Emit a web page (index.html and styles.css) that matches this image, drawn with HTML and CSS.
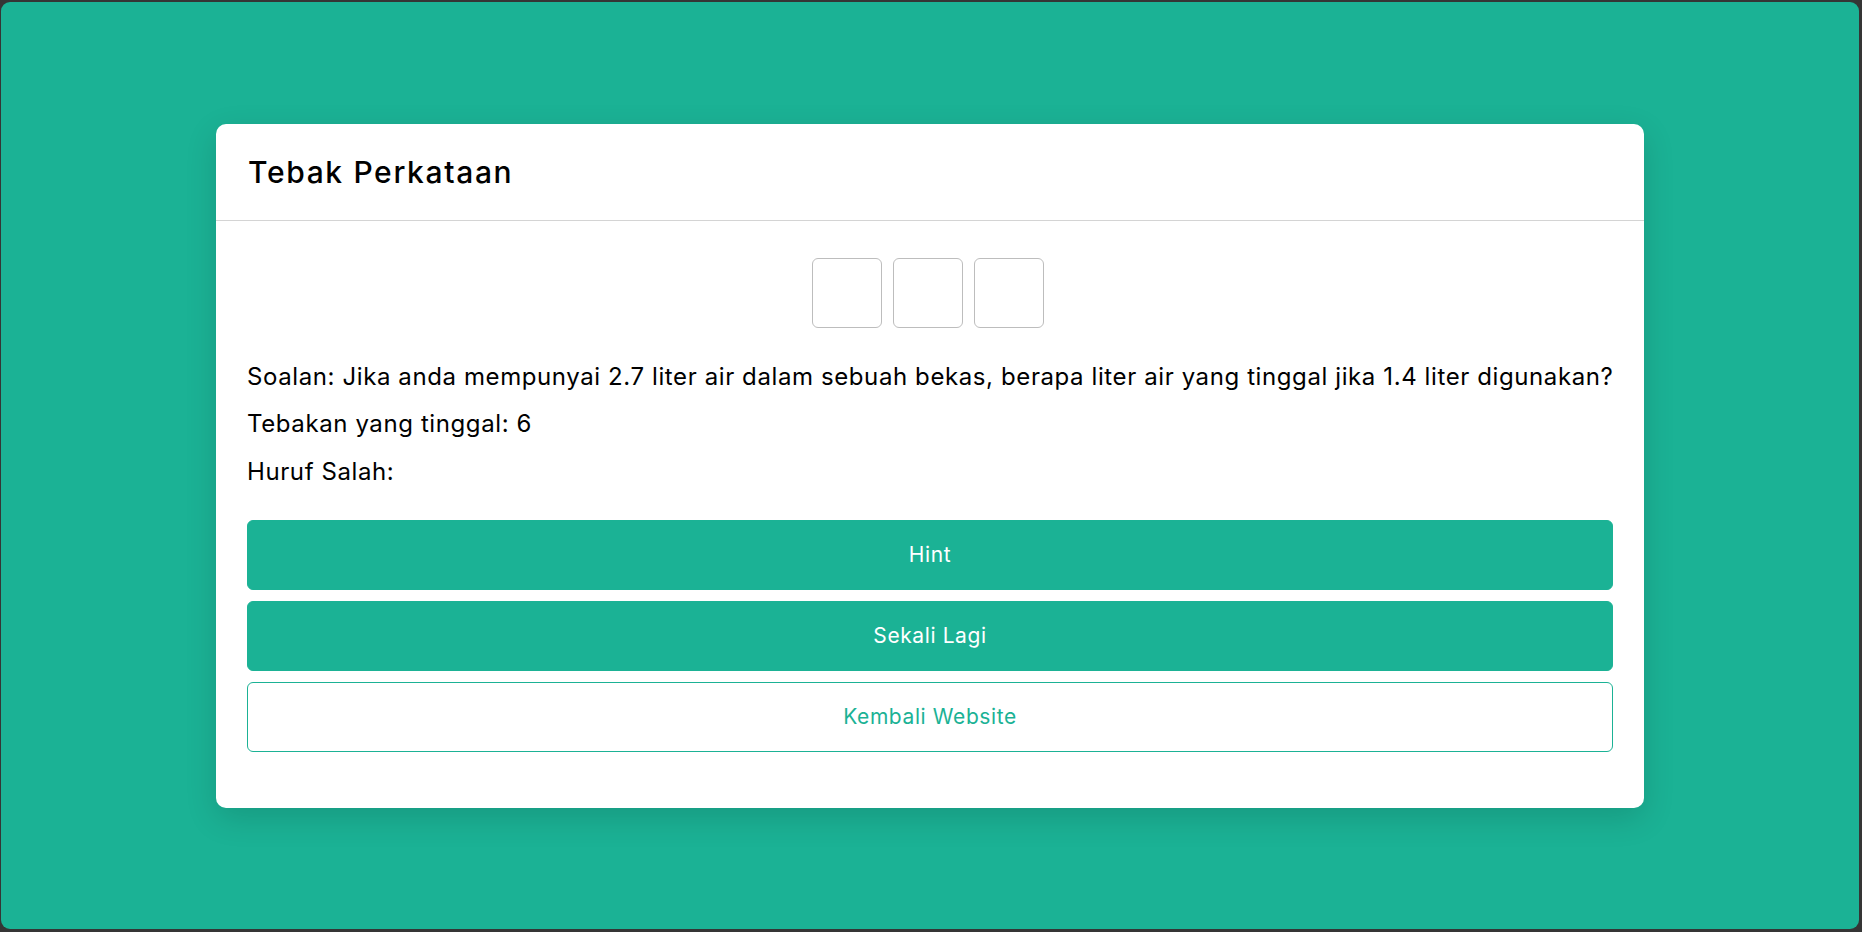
FILE: index.html
```html
<!DOCTYPE html>
<html lang="ms">
<head>
<meta charset="utf-8">
<title>Tebak Perkataan</title>
<link rel="stylesheet" href="styles.css">
</head>
<body>
<div class="frame">
  <div class="card">
    <div class="card-header">
      <h5 class="card-title">Tebak Perkataan</h5>
    </div>
    <div class="card-body">
      <div class="letters">
        <div class="letter"></div>
        <div class="letter"></div>
        <div class="letter"></div>
      </div>
      <p class="line">Soalan: Jika anda mempunyai 2.7 liter air dalam sebuah bekas, berapa liter air yang tinggal jika 1.4 liter digunakan?</p>
      <p class="line">Tebakan yang tinggal: 6</p>
      <p class="line">Huruf Salah: </p>
      <div class="actions">
        <button class="btn btn-fill">Hint</button>
        <button class="btn btn-fill">Sekali Lagi</button>
        <button class="btn btn-outline">Kembali Website</button>
      </div>
    </div>
  </div>
</div>
</body>
</html>
```
FILE: styles.css
```css
* { box-sizing: border-box; }
html, body { height: 100%; }
body {
  margin: 0;
  background: #353535;
  font-family: Inter, "Open Sans", sans-serif;
  color: #000;
  padding: 2px 3px 3px 1px;
}
.frame {
  height: 100%;
  background: #1bb295;
  border-radius: 9px;
  display: flex;
  align-items: center;
  justify-content: center;
}
.card {
  width: 1428px;
  background: #fff;
  border-radius: 10px;
  box-shadow: 0 10px 32px rgba(0, 0, 0, 0.14);
  overflow: hidden;
}
.card-header {
  padding: 30px 32px 30px 32px;
  border-bottom: 1px solid #d4d4d4;
}
.card-title {
  margin: 0;
  font-size: 30px;
  font-weight: 500;
  line-height: 36px;
  letter-spacing: 1.65px;
}
.card-body {
  padding: 37px 31px 56px 31px;
}
.letters {
  display: flex;
  justify-content: center;
  gap: 11px;
  padding-right: 4px;
  margin-bottom: 31px;
}
.letter {
  width: 70px;
  height: 70px;
  border: 1px solid #bdbdbd;
  border-radius: 6px;
}
.line {
  margin: 0 0 11.5px 0;
  font-size: 24px;
  line-height: 36px;
  letter-spacing: 0.6px;
  white-space: nowrap;
}
.actions {
  margin-top: 30px;
  display: flex;
  flex-direction: column;
  gap: 11px;
}
.btn {
  display: block;
  width: 100%;
  height: 70px;
  border-radius: 6px;
  font-family: Inter, "Open Sans", sans-serif;
  font-size: 21px;
  letter-spacing: 0.6px;
  cursor: pointer;
}
.btn-fill {
  background: #1bb295;
  border: 1px solid #1bb295;
  color: #fff;
}
.btn-outline {
  background: #fff;
  border: 1px solid #1bb295;
  color: #1bb295;
}
```
